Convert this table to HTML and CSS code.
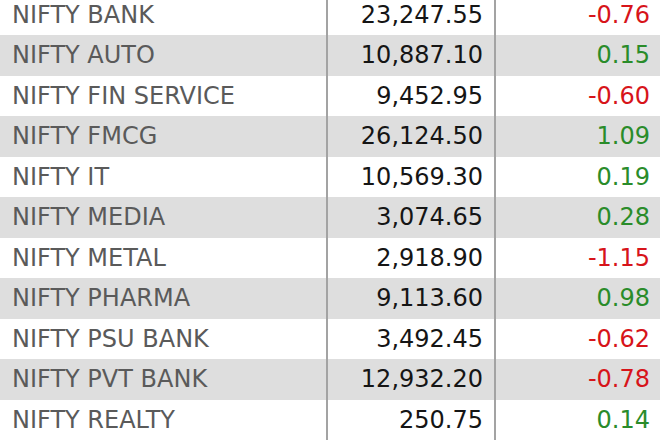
FILE: index.html
```html
<!DOCTYPE html>
<html>
<head>
<meta charset="utf-8">
<link rel="stylesheet" href="styles.css">
</head>
<body>
<table class="sectors">
  <tr class="first"><td class="name">NIFTY BANK</td><td class="val">23,247.55</td><td class="chg neg">-0.76</td></tr>
  <tr><td class="name">NIFTY AUTO</td><td class="val">10,887.10</td><td class="chg pos">0.15</td></tr>
  <tr><td class="name">NIFTY FIN SERVICE</td><td class="val">9,452.95</td><td class="chg neg">-0.60</td></tr>
  <tr><td class="name">NIFTY FMCG</td><td class="val">26,124.50</td><td class="chg pos">1.09</td></tr>
  <tr><td class="name">NIFTY IT</td><td class="val">10,569.30</td><td class="chg pos">0.19</td></tr>
  <tr><td class="name">NIFTY MEDIA</td><td class="val">3,074.65</td><td class="chg pos">0.28</td></tr>
  <tr><td class="name">NIFTY METAL</td><td class="val">2,918.90</td><td class="chg neg">-1.15</td></tr>
  <tr><td class="name">NIFTY PHARMA</td><td class="val">9,113.60</td><td class="chg pos">0.98</td></tr>
  <tr><td class="name">NIFTY PSU BANK</td><td class="val">3,492.45</td><td class="chg neg">-0.62</td></tr>
  <tr><td class="name">NIFTY PVT BANK</td><td class="val">12,932.20</td><td class="chg neg">-0.78</td></tr>
  <tr><td class="name">NIFTY REALTY</td><td class="val">250.75</td><td class="chg pos">0.14</td></tr>
</table>
</body>
</html>
```

FILE: styles.css
```css
html, body {
  margin: 0;
  padding: 0;
  background: #ffffff;
  overflow: hidden;
}
.sectors {
  width: 660px;
  border-collapse: collapse;
  table-layout: fixed;
  font-family: "DejaVu Sans", sans-serif;
  font-size: 24px;
}
.sectors tr {
  height: 40.5px;
}
.sectors tr.first {
  height: 35px;
}
.sectors tr.first td {
  padding-bottom: 5px;
}
.sectors tr:nth-child(even) {
  background: #dedede;
}
.sectors td {
  box-sizing: border-box;
  padding: 0;
  line-height: 1;
  vertical-align: middle;
  white-space: nowrap;
}
.name {
  width: 327px;
  padding-left: 12px !important;
  color: #5a5a5a;
}
.val {
  width: 168px;
  text-align: right;
  padding-right: 11px !important;
  color: #151515;
  border-left: 2px solid #a3a3a3;
  border-right: 2px solid #a3a3a3;
}
.chg {
  text-align: right;
  padding-right: 10px !important;
}
.neg { color: #d7141a; }
.pos { color: #2a8c2a; }
```
